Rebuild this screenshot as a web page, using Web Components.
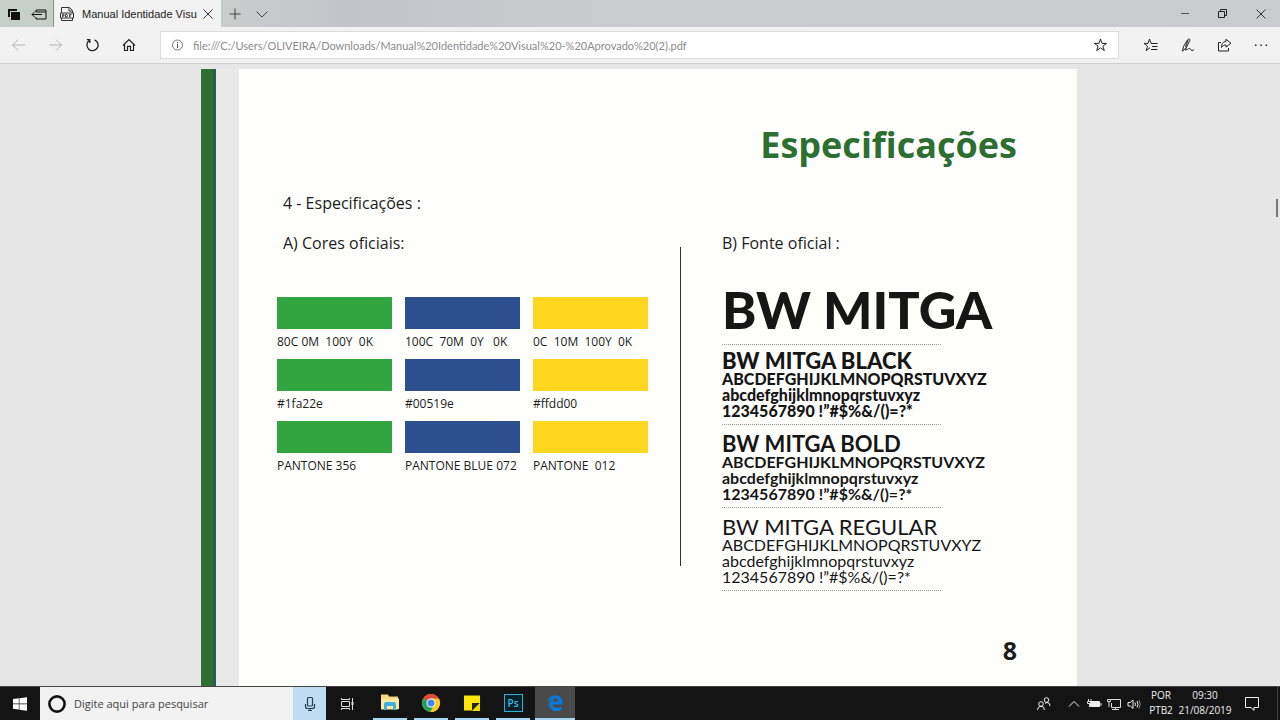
<!DOCTYPE html>
<html lang="pt-BR">
<head>
<meta charset="utf-8">
<title>Manual Identidade Visual</title>
<style>
html, body { height: 100%; margin: 0; }
body { font-family: "Open Sans", "Noto Sans", sans-serif; color: #1c1c1c; overflow: hidden; }
</style>
</head>
<body>
<app-desktop></app-desktop>
<script>
const ICONS = {
  tabs: [16, '<path d="M3 3h9v2H5v6H3zM6 6h9v8H6z" fill="#111"/>'],
  aside: [16, '<path d="M5 6V4h10v9H5v-2M1 8.500h10M4 5.500l-3 3 3 3M5 6h10" fill="none" stroke="#111"/>'],
  pdf: [16, '<path d="M2.500 7V1.500h8l3 3V7M10 2v3h3M2.500 12v2.500h11V12" fill="none" stroke="#333"/><path d="M1.500 7h13v5h-13z" fill="none" stroke="#333"/><path d="M3.500 11V8.500h1.500v1.500H4M6.500 8.500V11H8L8.500 9.500 8 8.500zM10.500 11V8.500h2M10.500 10h1.500" fill="none" stroke="#333" stroke-width=".9"/>'],
  close: [16, '<path d="M3.500 3.500l9 9M12.500 3.500l-9 9" fill="none" stroke="#333"/>'],
  plus: [16, '<path d="M8 2.500v11M2.500 8h11" fill="none" stroke="#444"/>'],
  down: [16, '<path d="M2.500 5.500L8 11l5.500-5.500" fill="none" stroke="#444"/>'],
  min: [16, '<path d="M4 7.500h8" fill="none" stroke="#555"/>'],
  restore: [16, '<path d="M3.500 5.500h6v6h-6zM5.500 5.500v-2h6v6h-2" fill="none" stroke="#222"/>'],
  back: [16, '<path d="M14 8h-12.500M7 2.500L1.500 8 7 13.500" fill="none" stroke="#b5b5b5"/>'],
  forward: [16, '<path d="M1.500 8h12.500M8 2.500L13.500 8 8 13.500" fill="none" stroke="#b5b5b5"/>'],
  reload: [16, '<path d="M9.500 2.800a5.600 5.600 0 1 1-5.400.8M1.800 2.700h3v3.400" fill="none" stroke="#222" stroke-width="1.300"/>'],
  home: [16, '<path d="M1 8.500l6-5.900 6 5.900M2.500 7.300v6.200h3V9.300h3v4.200h3V7.300" fill="none" stroke="#222" stroke-width="1.200"/>'],
  info: [16, '<circle cx="8.500" cy="8" r="5" fill="none" stroke="#777"/><path d="M8.500 7v4M8.500 5v1.200" stroke="#555"/>'],
  star: [16, '<path d="M8.500 2l1.500 4.400h4.600l-3.700 2.800 1.400 4.400-3.800-2.700-3.800 2.700 1.400-4.400-3.700-2.800H7z" fill="none" stroke="#222"/>'],
  favs: [16, '<path d="M9.500 6.400H8L6.500 2 5 6.400H1l3.500 2.800-1.300 4.400L7 10.700M8 6.500h6.500M9 9.500h5.500M8 12.500h6.500" fill="none" stroke="#222"/>'],
  pen: [16, '<path d="M2.500 14.200l1-4.700 4.300-7c.9-1.200 2.600-.3 2 1L6.200 10.700l-3.700 3.500zM8 3l-2.500 7M6.300 10.500l-.8 2.500c1.500.3 2.500-1.500 4-1.500s1 2 2.500 2c1 0 1.500-.5 2-1" fill="none" stroke="#222"/>'],
  share: [16, '<path d="M4 5.500H1.500v8.500h10v-3M9 2.300l5 3.900-5 3.900V8c-2 0-3.500.7-4.500 2.500C4.500 7 6 4.500 9 4.500z" fill="none" stroke="#222"/>'],
  dots: [16, '<path d="M1 7.500h1.500V9H1zM6.300 7.500h1.500V9H6.300zM11.600 7.500h1.500V9h-1.500z" fill="#222"/>'],
  windows: [16, '<path d="M1 3.100l5.800-.8v5.300H1zM7.400 2.200L15 1.200v6.400H7.400zM1 8.200h5.800v5.400L1 12.800zM7.400 8.200H15v6.500l-7.600-1z" fill="#fff"/>'],
  cortana: [20, '<circle cx="10" cy="10" r="7.600" fill="none" stroke="#111" stroke-width="2.600"/>'],
  mic: [16, '<rect x="5.500" y="1.500" width="5" height="8.500" rx="1" fill="none" stroke="#244055" stroke-width="1.200"/><path d="M3.500 8v2.500q0 2 2 2h5q2 0 2-2V8M8 12.500V15M6 14.500h4" fill="none" stroke="#244055" stroke-width="1.200"/>'],
  taskview: [16, '<path d="M2.500 2v1.500h8V2M2.500 14v-1.500h8V14M2.500 5.500h8v5h-8zM13.500 2v12" fill="none" stroke="#ddd"/><path d="M12.500 6h2v3h-2z" fill="#ddd"/>'],
  folder: [20, '<path d="M1 1.500h7l1 2h9v13H1z" fill="#f7d57a"/><path d="M1 5.500h18V16H1z" fill="#ffe9a0"/><path d="M4 17v-6q0-2 2-2h8q2 0 2 2v6h-3v-4H7v4z" fill="#3fb0de"/>'],
  chrome: [20, '<circle cx="10" cy="10" r="9" fill="#fbc91f"/><path d="M10 10L2.200 5.500A9 9 0 0 1 17.800 5.500z" fill="#dd4b3e"/><path d="M10 10L2.200 5.500A9 9 0 0 0 9.500 19L13 12z" fill="#25a05a"/><path d="M10 5.500h7.800A9 9 0 0 1 9.500 19l4-7z" fill="#fbc91f"/><circle cx="10" cy="10" r="4.500" fill="#fff"/><circle cx="10" cy="10" r="3.500" fill="#4285f4"/>'],
  note: [20, '<path d="M2 2.500h16v15H2z" fill="#ffe600"/><path d="M10 10h8l-8 8z" fill="#222"/><path d="M18 10v8h-8z" fill="#f2da00"/>'],
  edge: [18, '<path d="M1.500 8.300C2.100 4.200 5 1.300 9.200 1.300c4.600 0 7.300 3.200 7.300 7.300v1.900H6.600c.2 2.200 2 3.300 4.400 3.300 1.800 0 3.300-.4 4.600-1.200v3.300c-1.500.8-3.300 1.200-5.300 1.200-4.200 0-7.100-2.600-7.100-6.600 0-2.600 1.500-4.800 3.700-5.700C4.600 5.100 2.800 6.300 1.500 8.300zM6.700 7.500h5.700c0-1.800-1-3-2.600-3S7.100 5.600 6.700 7.500z" fill="#0a78d6"/>'],
  people: [16, '<circle cx="10.500" cy="4" r="2.300" fill="none" stroke="#eee"/><circle cx="5" cy="8" r="2.300" fill="none" stroke="#eee"/><path d="M1.500 14q0-3.700 3.500-3.700t3.500 3.700M9 7.500q1-1 2-1 3 0 3 3.500" fill="none" stroke="#eee"/>'],
  up: [16, '<path d="M3 10.500l5-5 5 5" fill="none" stroke="#eee"/>'],
  battery: [16, '<path d="M4.500 5.500h9v5h-9z" fill="#eee" stroke="#eee"/><path d="M14.500 7h1v3h-1z" fill="#eee"/><path d="M2.500 3v2M5 3v2M1.500 5.500h4v2h-4zM3.500 8v3" stroke="#ddd" fill="none"/>'],
  network: [16, '<path d="M4.500 3.500h10v8h-9V7M6 13.500h7M9.500 11.500v2M1.500 3.500h3v2h-3zM3 6v5" fill="none" stroke="#ddd"/>'],
  volume: [16, '<path d="M2 6.500h2.200L7 4v8.500L4.200 10H2z" fill="none" stroke="#eee"/><path d="M9 6.500q1 1.700 0 3.500M11 5q2 3.200 0 6.500" fill="none" stroke="#eee"/><path d="M13 4q2.500 4 0 8.500" fill="none" stroke="#888"/>'],
  action: [16, '<path d="M1.500 1.500h13v10h-4.500v2.800L7 11.500H1.500z" fill="none" stroke="#eee"/>']
};

class UiIcon extends HTMLElement {
  connectedCallback() {
    const [size, art] = ICONS[this.getAttribute('name')];
    this.attachShadow({ mode: 'open' }).innerHTML =
      `<style>:host{display:block;flex:none;width:${size}px;height:${size}px}svg{display:block}</style>
       <svg width="${size}" height="${size}" viewBox="0 0 ${size} ${size}" aria-hidden="true">${art}</svg>`;
  }
}

const define = (name, html) => {
  const template = document.createElement('template');
  template.innerHTML = html;
  customElements.define(name, class extends HTMLElement {
    constructor() {
      super();
      this.attachShadow({ mode: 'open' }).append(template.content.cloneNode(true));
    }
  });
};

customElements.define('ui-icon', UiIcon);

class IconButton extends HTMLElement {
  connectedCallback() {
    this.attachShadow({ mode: 'open' }).innerHTML = `
      <style>
        :host { display: flex; flex: none; width: var(--w, 36px); }
        button { flex: 1; display: flex; align-items: center; justify-content: center; border: 0; padding: 0; margin: 0; background: none; }
      </style>
      <button type="button" aria-label="${this.getAttribute('label')}"><ui-icon name="${this.getAttribute('icon')}"></ui-icon></button>`;
  }
}
customElements.define('icon-button', IconButton);

define('tab-strip', `
  <style>
    :host { display: flex; height: 27px; background: linear-gradient(90deg, #c5cfc9 0, #c8cdcb 18%, #c3c4ca 27%, #cbccce 50%, #cacbcd 100%); }
    .tools { display: flex; width: 53px; border-right: 1px solid #8a908d; --w: 26px; }
    .tab { display: flex; align-items: center; box-sizing: border-box; width: 167px; padding-left: 5px; background: #f2f2f2; font: 11px "Liberation Sans", sans-serif; color: #222; --w: 26px; }
    .tab span { flex: 1; min-width: 0; white-space: nowrap; padding-left: 7px; }
    .more { display: flex; --w: 27px; }
    .win { display: flex; margin-left: auto; --w: 38px; }
  </style>
  <div class="tools"><icon-button icon="tabs" label="Guias reservadas"></icon-button><icon-button icon="aside" label="Reservar guias"></icon-button></div>
  <div class="tab"><ui-icon name="pdf"></ui-icon><span><slot></slot></span><icon-button icon="close" label="Fechar guia"></icon-button></div>
  <div class="more"><icon-button icon="plus" label="Nova guia"></icon-button><icon-button icon="down" label="Visualizar guias"></icon-button></div>
  <div class="win"><icon-button icon="min" label="Minimizar"></icon-button><icon-button icon="restore" label="Restaurar"></icon-button><icon-button icon="close" label="Fechar"></icon-button></div>
`);

define('address-bar', `
  <style>
    :host { display: flex; height: 36px; align-items: center; background: #f2f2f2; border-bottom: 1px solid #cfcfcf; }
    .nav, .acts { display: flex; --w: 37px; }
    .box { flex: 1; display: flex; align-items: center; gap: 8px; height: 28px; box-sizing: border-box; background: #fff; border: 1px solid #dcdcdc; padding-left: 8px; margin: 0 13px 0 12px; }
    input { flex: 1; min-width: 0; border: 0; padding: 0; background: none; outline: 0; font: 11px Lato, sans-serif; color: #8c8c8c; }
  </style>
  <div class="nav"><icon-button icon="back" label="Voltar"></icon-button><icon-button icon="forward" label="Avançar"></icon-button><icon-button icon="reload" label="Atualizar"></icon-button><icon-button icon="home" label="Página inicial"></icon-button></div>
  <div class="box"><ui-icon name="info"></ui-icon><input type="text" aria-label="Endereço" value="file:///C:/Users/OLIVEIRA/Downloads/Manual%20Identidade%20Visual%20-%20Aprovado%20(2).pdf"><icon-button icon="star" label="Favoritar"></icon-button></div>
  <div class="acts"><icon-button icon="favs" label="Hub"></icon-button><icon-button icon="pen" label="Anotar"></icon-button><icon-button icon="share" label="Compartilhar"></icon-button><icon-button icon="dots" label="Mais"></icon-button></div>
`);

define('colour-swatch', `
  <style>
    :host { display: block; font-size: 12px; line-height: 16px; }
    .chip { height: 32px; background: var(--c); margin-bottom: 5px; }
    .cap { white-space: pre; }
  </style>
  <div class="chip"></div><div class="cap"><slot></slot></div>
`);

define('swatch-row', `
  <style>
    :host { display: grid; grid-template-columns: repeat(3, 1fr); gap: 13px; }
    ::slotted(:nth-child(1)) { --c: #32a540; }
    ::slotted(:nth-child(2)) { --c: #2c4f8f; }
    ::slotted(:nth-child(3)) { --c: #ffd71f; }
  </style><slot></slot>
`);

define('font-specimen', `
  <style>
    :host { display: block; font-family: Lato, sans-serif; white-space: nowrap; color: #161616; padding-top: 3px; }
    h3 { margin: 0; font-size: 22px; line-height: 20px; font-weight: inherit; }
    p { margin: 0; font-size: 16px; line-height: 16px; }
    hr { width: 219px; margin: 5px 0 6px; border: 0; border-top: 1px dotted #999; }
  </style>
  <h3><slot></slot></h3>
  <p>ABCDEFGHIJKLMNOPQRSTUVXYZ</p><p>abcdefghijklmnopqrstuvxyz</p><p>1234567890 !”#$%&amp;/()=?*</p>
  <hr>
`);

define('manual-page', `
  <style>
    :host { display: flex; flex-direction: column; background: #fefefd; padding: 50px 60px 18px 38px; }
    h1 { margin: 0; text-align: right; font-size: 36px; line-height: 52px; font-weight: 700; color: #2c6f31; }
    h2 { margin: 0; font-size: 16px; line-height: 24px; font-weight: 400; }
    .lead { padding: 20px 6px 16px; }
    .cols { display: grid; grid-template-columns: 403fr 337fr; flex: 1; }
    .left { box-sizing: border-box; padding-right: 32px; }
    .left h2 { padding-left: 6px; }
    .right { padding-left: 41px; align-self: start; }
    .rows { display: grid; gap: 9px; margin-top: 42px; }
    .rule { border-left: 1px solid #333; height: 319px; margin-top: 16px; }
    .split { display: flex; align-items: flex-start; }
    .brand { font: 900 52px/60px Lato, sans-serif; color: #161616; margin-top: 24px; white-space: nowrap; }
    .dots { width: 219px; margin: 5px 0 3px; border: 0; border-top: 1px dotted #999; }
    .black { font-weight: 900; } .bold { font-weight: 700; } .regular { font-weight: 400; }
    footer { text-align: right; font-size: 25px; line-height: 36px; font-weight: 700; }
  </style>
  <h1>Especificações</h1>
  <h2 class="lead">4 - Especificações :</h2>
  <div class="cols">
    <section class="left">
      <h2>A) Cores oficiais:</h2>
      <div class="rows">
        <swatch-row><colour-swatch>80C 0M  100Y  0K</colour-swatch><colour-swatch>100C  70M  0Y   0K</colour-swatch><colour-swatch>0C  10M  100Y  0K</colour-swatch></swatch-row>
        <swatch-row><colour-swatch>#1fa22e</colour-swatch><colour-swatch>#00519e</colour-swatch><colour-swatch>#ffdd00</colour-swatch></swatch-row>
        <swatch-row><colour-swatch>PANTONE 356</colour-swatch><colour-swatch>PANTONE BLUE 072</colour-swatch><colour-swatch>PANTONE  012</colour-swatch></swatch-row>
      </div>
    </section>
    <div class="split">
      <div class="rule"></div>
      <section class="right">
        <h2>B) Fonte oficial :</h2>
        <div class="brand">BW MITGA</div>
        <hr class="dots">
        <font-specimen class="black">BW MITGA BLACK</font-specimen>
        <font-specimen class="bold">BW MITGA BOLD</font-specimen>
        <font-specimen class="regular">BW MITGA REGULAR</font-specimen>
      </section>
    </div>
  </div>
  <footer>8</footer>
`);

define('pdf-viewer', `
  <style>
    :host { display: grid; grid-template-columns: 201fr 15px 23px 838fr 203fr; background: #e6e6e6; min-height: 0; padding-top: 5px; }
    .edge { grid-column: 2; box-sizing: border-box; background: #2c6f31; border-right: 3px solid #2c5a54; }
    .gap { background: #e9e9e9; }
    .side { display: flex; justify-content: flex-end; }
    .thumb { width: 2px; height: 18px; margin: 130px 2px 0 0; background: #777; }
  </style>
  <div class="edge"></div><div class="gap"></div><slot></slot>
  <div class="side"><div class="thumb"></div></div>
`);

define('task-bar', `
  <style>
    :host { display: flex; height: 34px; background: #141414; color: #eee; box-sizing: border-box; border-top: 1px solid #444; }
    .search { display: flex; align-items: center; gap: 7px; width: 253px; padding-left: 7px; box-sizing: border-box; background: #f2f2f2; }
    input { flex: 1; min-width: 0; border: 0; padding: 0; background: none; outline: 0; font: 11px "Open Sans", sans-serif; color: #444; }
    input::placeholder { color: #444; opacity: 1; }
    .mic { display: flex; background: #c0dcf3; --w: 33px; }
    .apps { display: flex; gap: 7px; margin-left: 6px; --w: 34px; }
    .apps > * { border-bottom: 2px solid #a9d4f2; }
    .apps .on { background: #4a4a4a; --w: 40px; margin-left: -2px; }
    .apps .ps { width: 34px; padding: 0; border-width: 0 0 2px; background: none; display: flex; align-items: center; justify-content: center; }
    .ps span { box-sizing: border-box; width: 19px; height: 18px; border: 1px solid #27b3d6; background: #06202b; color: #35c2e6; font: 600 10px/16px "Open Sans", sans-serif; text-align: center; }
    .tray { display: flex; margin: 0 2px 0 auto; padding-right: 9px; border-right: 1px solid #444; font-size: 10px; line-height: 15px; text-align: center; align-items: stretch; --w: 20px; }
    .tray p { margin: 0; white-space: pre-line; padding-top: 1px; }
    .lang { width: 26px; padding-left: 4px; } .clock { width: 62px; }
  </style>
  <icon-button icon="windows" label="Iniciar" style="--w:40px"></icon-button>
  <label class="search"><ui-icon name="cortana"></ui-icon><input type="text" aria-label="Pesquisar" placeholder="Digite aqui para pesquisar"></label>
  <div class="mic"><icon-button icon="mic" label="Falar"></icon-button></div>
  <icon-button icon="taskview" label="Visão de tarefas" style="--w:41px"></icon-button>
  <div class="apps">
    <icon-button icon="folder" label="Explorador"></icon-button><icon-button icon="chrome" label="Chrome"></icon-button><icon-button icon="note" label="Notas"></icon-button>
    <button type="button" class="ps"><span>Ps</span></button>
    <icon-button class="on" icon="edge" label="Edge"></icon-button>
  </div>
  <div class="tray">
    <icon-button icon="people" label="Pessoas" style="--w:40px"></icon-button><icon-button icon="up" label="Ícones ocultos"></icon-button><icon-button icon="battery" label="Bateria"></icon-button><icon-button icon="network" label="Rede"></icon-button><icon-button icon="volume" label="Volume"></icon-button>
    <p class="lang">POR
PTB2</p><p class="clock">09:30
21/08/2019</p>
    <icon-button icon="action" label="Notificações" style="--w:32px"></icon-button>
  </div>
`);

define('app-desktop', `
  <style>
    :host { display: flex; flex-direction: column; height: 100vh; }
    tab-strip, address-bar, task-bar { flex: none; }
    pdf-viewer { flex: 1; }
  </style>
  <tab-strip>Manual Identidade Visu</tab-strip>
  <address-bar></address-bar>
  <pdf-viewer><manual-page></manual-page></pdf-viewer>
  <task-bar></task-bar>
`);
</script>
</body>
</html>
